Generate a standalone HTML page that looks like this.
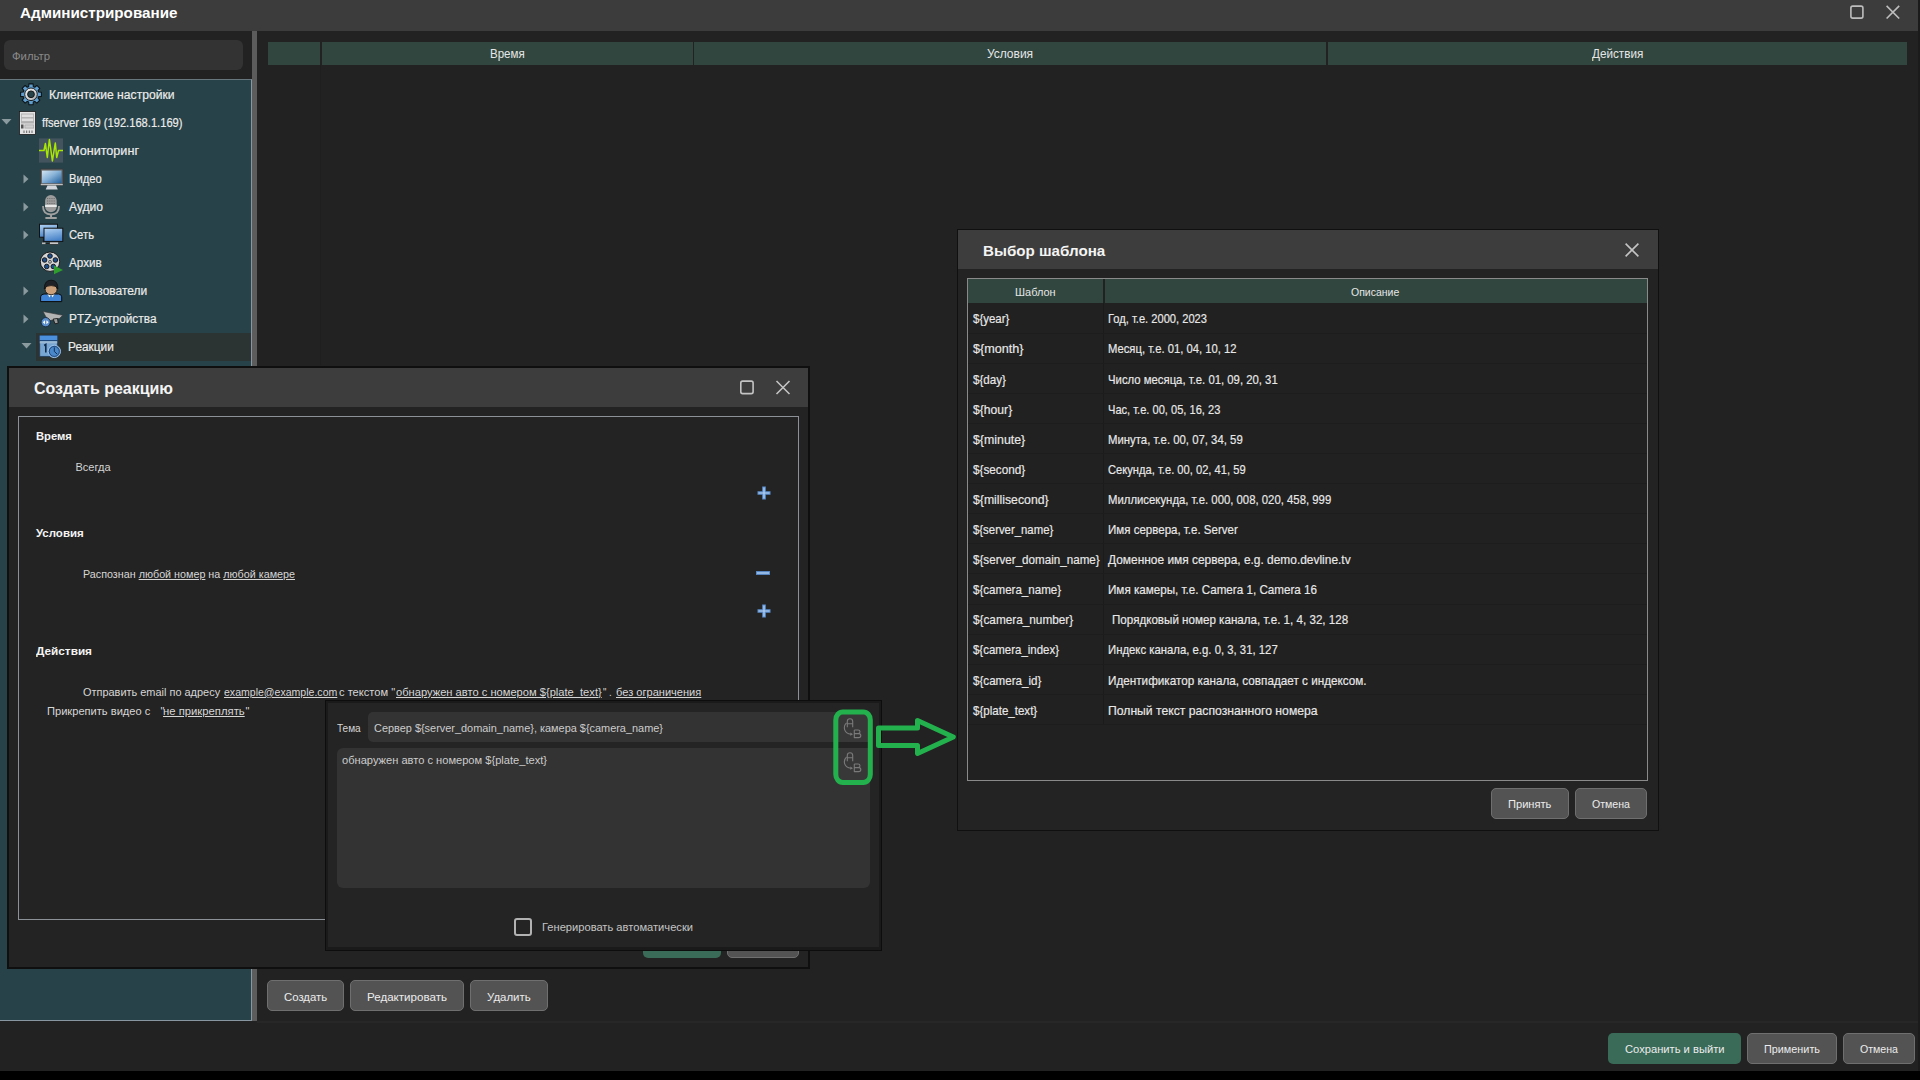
<!DOCTYPE html>
<html><head><meta charset="utf-8"><style>
html,body{margin:0;padding:0;width:1920px;height:1080px;overflow:hidden;background:#222222;font-family:"Liberation Sans", sans-serif;}
u{text-decoration:underline;text-underline-offset:1px;}
</style></head><body>
<div style="position:absolute;left:0px;top:0px;width:1918px;height:31px;background:#3c3c3c"></div>
<div style="position:absolute;left:1918px;top:0px;width:2px;height:1080px;background:#1b1b1b"></div>
<svg style="position:absolute;left:1846px;top:1px" width="60" height="24" viewBox="1846 1 60 24"><rect x="1850.9" y="6.1" width="12" height="12" rx="1.8" fill="none" stroke="#bdbdbd" stroke-width="1.6"/><path d="M1886.6 5.9 L1899.2 18.5 M1899.2 5.9 L1886.6 18.5" stroke="#bdbdbd" stroke-width="1.6"/></svg>
<div style="position:absolute;left:4px;top:40px;width:239px;height:30px;background:#333333;border-radius:6px"></div>
<div style="position:absolute;left:0px;top:79px;width:251px;height:941px;background:#284249;border-top:1px solid #66767c;border-right:1px solid #8796a0;border-bottom:1px solid #8796a0;box-sizing:border-box;width:252px;height:942px"></div>
<div style="position:absolute;left:252px;top:31px;width:5px;height:990px;background:#5c5c5c"></div>
<div style="position:absolute;left:36px;top:333px;width:215px;height:28px;background:#2c3433"></div>
<div style="position:absolute;left:268px;top:42px;width:52px;height:23px;background:#30463f"></div>
<div style="position:absolute;left:322px;top:42px;width:371px;height:23px;background:#30463f"></div>
<div style="position:absolute;left:694px;top:42px;width:632px;height:23px;background:#30463f"></div>
<div style="position:absolute;left:1328px;top:42px;width:579px;height:23px;background:#30463f"></div>
<div style="position:absolute;left:320px;top:65px;width:1px;height:300px;background:#1f1f1f"></div>
<div style="position:absolute;left:257px;top:1021px;width:1661px;height:2px;background:#272727"></div>
<div style="position:absolute;left:0px;top:1071px;width:1920px;height:9px;background:#000"></div>
<div style="position:absolute;left:267px;top:979.5px;width:77px;height:31.5px;background:#535353;border:1px solid #6f6f6f;border-radius:5px;box-sizing:border-box"></div>
<div style="position:absolute;left:350px;top:979.5px;width:114px;height:31.5px;background:#535353;border:1px solid #6f6f6f;border-radius:5px;box-sizing:border-box"></div>
<div style="position:absolute;left:470px;top:979.5px;width:78px;height:31.5px;background:#535353;border:1px solid #6f6f6f;border-radius:5px;box-sizing:border-box"></div>
<div style="position:absolute;left:1608px;top:1033px;width:133px;height:31px;background:#3a6a58;border-radius:5px;box-sizing:border-box"></div>
<div style="position:absolute;left:1747px;top:1033px;width:90px;height:31px;background:#535353;border:1px solid #6f6f6f;border-radius:5px;box-sizing:border-box"></div>
<div style="position:absolute;left:1843px;top:1033px;width:72px;height:31px;background:#535353;border:1px solid #6f6f6f;border-radius:5px;box-sizing:border-box"></div>
<svg style="position:absolute;left:1px;top:118px" width="12" height="8"><path d="M0.5 1 L10.5 1 L5.5 6.5Z" fill="#8a9a9e"/></svg>
<svg style="position:absolute;left:22px;top:174px" width="8" height="10"><path d="M1.5 0.5 L6.5 5 L1.5 9.5Z" fill="#8a9a9e"/></svg>
<svg style="position:absolute;left:22px;top:202px" width="8" height="10"><path d="M1.5 0.5 L6.5 5 L1.5 9.5Z" fill="#8a9a9e"/></svg>
<svg style="position:absolute;left:22px;top:230px" width="8" height="10"><path d="M1.5 0.5 L6.5 5 L1.5 9.5Z" fill="#8a9a9e"/></svg>
<svg style="position:absolute;left:22px;top:286px" width="8" height="10"><path d="M1.5 0.5 L6.5 5 L1.5 9.5Z" fill="#8a9a9e"/></svg>
<svg style="position:absolute;left:22px;top:314px" width="8" height="10"><path d="M1.5 0.5 L6.5 5 L1.5 9.5Z" fill="#8a9a9e"/></svg>
<svg style="position:absolute;left:21px;top:342px" width="12" height="8"><path d="M0.5 1 L10.5 1 L5.5 6.5Z" fill="#8a9a9e"/></svg>
<svg style="position:absolute;left:15px;top:80px" width="30" height="30" viewBox="0 0 30 30">
<defs><linearGradient id="rg" x1="0" y1="0" x2="1" y2="1"><stop offset="0" stop-color="#f4f4f4"/><stop offset="0.6" stop-color="#d0d0d0"/><stop offset="1" stop-color="#9a9a9a"/></linearGradient></defs>
<g transform="translate(16,14.3)">
<path fill="#5f9fd0" stroke="#0c1418" stroke-width="1.1" stroke-linejoin="round" d="M-2.34,-7.65 L-2.11,-10.39 L2.11,-10.39 L2.34,-7.65 L3.76,-7.06 L5.85,-8.84 L8.84,-5.85 L7.06,-3.76 L7.65,-2.34 L10.39,-2.11 L10.39,2.11 L7.65,2.34 L7.06,3.76 L8.84,5.85 L5.85,8.84 L3.76,7.06 L2.34,7.65 L2.11,10.39 L-2.11,10.39 L-2.34,7.65 L-3.76,7.06 L-5.85,8.84 L-8.84,5.85 L-7.06,3.76 L-7.65,2.34 L-10.39,2.11 L-10.39,-2.11 L-7.65,-2.34 L-7.06,-3.76 L-8.84,-5.85 L-5.85,-8.84 L-3.76,-7.06Z"/>
<circle r="6.3" fill="url(#rg)" stroke="#101010" stroke-width="0.9"/>
<circle r="3.4" fill="#284249" stroke="#101010" stroke-width="0.9"/>
</g></svg>
<svg style="position:absolute;left:19px;top:111px" width="17" height="24" viewBox="0 0 17 24">
<rect x="0.5" y="0.5" width="16" height="23" fill="#e4e4e4" stroke="#1a1a1a" stroke-width="0.8"/>
<rect x="2" y="2.5" width="13" height="10" fill="#b0b0b0"/>
<rect x="2.8" y="3.5" width="11.4" height="2.6" fill="#dedede"/><rect x="2.8" y="7.5" width="11.4" height="2.6" fill="#dedede"/>
<rect x="2" y="13.5" width="2.5" height="4" fill="#555"/><rect x="5.5" y="13.5" width="9.5" height="4" fill="#a8a8a8"/><rect x="6.3" y="14.3" width="8" height="2.4" fill="#cfcfcf"/>
<path d="M5 19.5 L5 22 M7.7 19.5 L7.7 22 M10.3 19.5 L10.3 22 M13 19.5 L13 22" stroke="#666" stroke-width="1"/></svg>
<svg style="position:absolute;left:39px;top:138px" width="24" height="25" viewBox="0 0 24 25">
<rect x="0" y="0.4" width="24" height="24.2" fill="#44545e"/>
<path d="M0 12.5 L5 12.5 L6.4 5.5 L8.3 19.5 L10.4 1.5 L13.4 23 L16.3 5 L17.7 19.5 L19.5 12.5 L24 12.5" fill="none" stroke="#a8e800" stroke-width="1.5" stroke-linejoin="round"/></svg>
<svg style="position:absolute;left:40px;top:168px" width="24" height="22" viewBox="0 0 24 22">
<defs><linearGradient id="mg" x1="0" y1="0" x2="1" y2="1"><stop offset="0" stop-color="#d4e4f0"/><stop offset="0.45" stop-color="#8ab4d8"/><stop offset="1" stop-color="#1d5e9c"/></linearGradient></defs>
<rect x="0.5" y="1" width="22.5" height="16.2" rx="1" fill="#666" stroke="#3a3a3a" stroke-width="0.8"/>
<rect x="2" y="2.6" width="19.5" height="12.6" fill="url(#mg)"/>
<rect x="0.8" y="16" width="22" height="1.2" fill="#c0c0c0"/>
<path d="M7.5 17.6 L16 17.6 L17.8 21.4 L5.7 21.4Z" fill="#d0d6dc"/></svg>
<svg style="position:absolute;left:41px;top:194px" width="20" height="26" viewBox="0 0 20 26">
<rect x="4.1" y="1" width="11.6" height="17.3" rx="5.8" fill="#9c9c9c"/>
<path d="M6 4.5 L14 4.5 M6 7 L14 7 M6 9.5 L14 9.5" stroke="#6a6a6a" stroke-width="0.9" stroke-dasharray="1.2 1"/>
<rect x="4.1" y="10.8" width="11.6" height="2.2" fill="#e8e8e8"/>
<path d="M2 12 Q2 20.5 10 20.5 Q18 20.5 18 12" fill="none" stroke="#a0a0a0" stroke-width="1.8"/>
<rect x="9.1" y="20.3" width="1.9" height="3.5" fill="#a0a0a0"/><rect x="4.1" y="23" width="11.9" height="2" rx="1" fill="#a0a0a0"/></svg>
<svg style="position:absolute;left:39px;top:223px" width="25" height="23" viewBox="0 0 25 23">
<defs><linearGradient id="ng" x1="0" y1="0" x2="0.3" y2="1"><stop offset="0" stop-color="#b4d4f4"/><stop offset="1" stop-color="#4a84c8"/></linearGradient></defs>
<rect x="0.5" y="1.2" width="18" height="13" fill="url(#ng)" stroke="#111" stroke-width="1"/>
<path d="M4.5 14.2 L4.5 20.5 L10.5 20.5" stroke="#222" stroke-width="1.2" fill="none"/>
<rect x="5" y="5.2" width="18.8" height="13.2" fill="url(#ng)" stroke="#111" stroke-width="1"/>
<rect x="10.7" y="19" width="8.8" height="2.3" fill="#c8c8c8" stroke="#222" stroke-width="0.6"/>
<rect x="3" y="19.5" width="3.5" height="1.6" fill="#bbb"/></svg>
<svg style="position:absolute;left:39px;top:251px" width="26" height="25" viewBox="0 0 26 25">
<circle cx="11" cy="10.7" r="9.7" fill="#d4d4d4" stroke="#111" stroke-width="0.9"/>
<g fill="#1d4e8a" stroke="#111" stroke-width="0.9">
<circle cx="11" cy="5" r="2.3"/><circle cx="16.4" cy="9" r="2.3"/><circle cx="14.3" cy="15.5" r="2.3"/><circle cx="7.7" cy="15.5" r="2.3"/><circle cx="5.6" cy="9" r="2.3"/></g>
<rect x="9.8" y="9.6" width="2.4" height="2.4" rx="0.6" fill="#eee" stroke="#111" stroke-width="0.8"/>
<path d="M15 14.5 L24 19 L15 23.3Z" fill="#2f9e2f"/></svg>
<svg style="position:absolute;left:40px;top:279px" width="23" height="24" viewBox="0 0 23 24">
<path d="M0.6 22.6 L0.6 17.8 Q0.8 15.2 4 15 L18.5 15 Q21.6 15.2 21.7 17.8 L21.7 22.6Z" fill="#3f84d4" stroke="#0a0a0a" stroke-width="1"/>
<path d="M7.5 15 L9.5 18.5 L11 15.5 L12.5 18.5 L14.5 15Z" fill="#f0f0f0"/>
<ellipse cx="11.1" cy="10.5" rx="6" ry="5.2" fill="#c9a07a" stroke="#111" stroke-width="0.8"/>
<path d="M4.3 10 Q4 1.2 11.1 1.2 Q18.2 1.2 17.9 10 Q16.5 6.5 11.1 6.6 Q5.7 6.5 4.3 10Z" fill="#1f2226" stroke="#0a0a0a" stroke-width="0.7"/></svg>
<svg style="position:absolute;left:40px;top:309px" width="24" height="20" viewBox="0 0 24 20">
<path d="M3 2.5 L22.8 6.3 L19.6 9.3 L10 11.6 L6 8Z" fill="#b4b4b4" stroke="#333" stroke-width="0.6"/>
<path d="M13.2 10 L17.5 9.5 L18.2 14.2 L15 14.8Z" fill="#9a9a9a" stroke="#111" stroke-width="0.8"/>
<circle cx="5.7" cy="13.2" r="4.6" fill="#5b8fcc" stroke="#0f1f33" stroke-width="0.8"/>
<path d="M2.8 13.2 L5 11.2 L5 15.2Z M8.6 13.2 L6.4 11.2 L6.4 15.2Z" fill="#fff"/></svg>
<svg style="position:absolute;left:39px;top:335px" width="23" height="26" viewBox="0 0 23 26">
<rect x="0.8" y="0.7" width="17.4" height="20.6" fill="#78a6d2" stroke="#1d3c66" stroke-width="0.7"/>
<rect x="0.8" y="0.7" width="17.4" height="4.3" fill="#4b90dc"/>
<rect x="0.8" y="5" width="17.4" height="1.2" fill="#1f4a80"/>
<rect x="0.8" y="6.2" width="17.4" height="2.2" fill="#9ab8d4"/>
<path d="M5.2 10.5 L6.8 9.5 L6.8 17.5" stroke="#0f2a4a" stroke-width="1.6" fill="none"/>
<circle cx="15.3" cy="16.4" r="6.2" fill="#4a88cc" stroke="#9cc0e4" stroke-width="1"/>
<circle cx="15.3" cy="16.4" r="5" fill="none" stroke="#1a3a66" stroke-width="0.8"/>
<path d="M15.3 12.3 L15.3 16.4 L18 19" stroke="#10253f" stroke-width="0.9" fill="none"/></svg>
<div style="position:absolute;left:7px;top:366px;width:803px;height:603px;background:#0f0f0f"></div>
<div style="position:absolute;left:9px;top:368px;width:799px;height:599px;background:#232323"></div>
<div style="position:absolute;left:9px;top:368px;width:799px;height:39px;background:#3d3d3d"></div>
<svg style="position:absolute;left:735px;top:375px" width="60" height="25" viewBox="735 375 60 25"><rect x="740.8" y="381.1" width="12.3" height="12.5" rx="1.8" fill="none" stroke="#c4c4c4" stroke-width="1.6"/><path d="M776.5 381 L789.5 394 M789.5 381 L776.5 394" stroke="#c4c4c4" stroke-width="1.6"/></svg>
<div style="position:absolute;left:18px;top:416px;width:781px;height:504px;border:1px solid #8c9097;box-sizing:border-box"></div>
<svg style="position:absolute;left:755.9px;top:484.9px" width="16" height="16" viewBox="0 0 16 16"><path d="M8 1.5 L8 14.5 M1.5 8 L14.5 8" stroke="#5b8fd0" stroke-width="3.6"/><path d="M8 2.5 L8 13.5 M2.5 8 L13.5 8" stroke="#b8d2ee" stroke-width="1.2"/></svg>
<svg style="position:absolute;left:754.8px;top:565px" width="16" height="16" viewBox="0 0 16 16"><path d="M1 8 L15 8" stroke="#5b8fd0" stroke-width="3.8"/><path d="M2 8 L14 8" stroke="#b8d2ee" stroke-width="1.2"/></svg>
<svg style="position:absolute;left:755.8px;top:603.2px" width="16" height="16" viewBox="0 0 16 16"><path d="M8 1.5 L8 14.5 M1.5 8 L14.5 8" stroke="#5b8fd0" stroke-width="3.6"/><path d="M8 2.5 L8 13.5 M2.5 8 L13.5 8" stroke="#b8d2ee" stroke-width="1.2"/></svg>
<div style="position:absolute;left:643px;top:927px;width:78px;height:31px;background:#3a6a58;border-radius:5px"></div>
<div style="position:absolute;left:726.5px;top:927px;width:72.5px;height:31px;background:#535353;border:1px solid #6f6f6f;border-radius:5px;box-sizing:border-box"></div>
<div style="position:absolute;left:325px;top:700px;width:557px;height:251px;background:#0d0d0d"></div>
<div style="position:absolute;left:326px;top:701px;width:555px;height:249px;background:#1a1a1a"></div>
<div style="position:absolute;left:328px;top:703px;width:551px;height:244px;background:#242424"></div>
<div style="position:absolute;left:367.7px;top:711.7px;width:500.3px;height:30px;background:#333333;border-radius:5px"></div>
<div style="position:absolute;left:838px;top:711.7px;width:30px;height:30px;background:#383838"></div>
<div style="position:absolute;left:336.7px;top:747.7px;width:533.3px;height:140.6px;background:#333333;border-radius:6px"></div>
<div style="position:absolute;left:838px;top:747.7px;width:30px;height:34px;background:#383838"></div>
<svg style="position:absolute;left:842px;top:716.5px" width="24" height="24" viewBox="0 0 24 24">
<g fill="none" stroke="#7a7a7a" stroke-width="1.1" stroke-linejoin="round">
<path d="M5.3 10.2 L5.3 4.6 Q5.3 1.8 8 1.8 Q10.7 1.8 10.7 4.6 L10.7 10.2 M5.3 6.8 L10.7 6.8"/>
<path d="M4.6 5.8 Q1.6 8.5 2.6 12.6 Q4 16.6 9 17.2"/>
<path d="M12.3 13 L12.3 20.6 L16.6 20.6 Q18.8 20.6 18.8 18.5 Q18.8 16.6 16.4 16.6 L12.3 16.6 M12.3 13 L16 13 Q18 13 18 14.8 Q18 16.6 16 16.6"/>
</g>
<path d="M8.4 15.6 L11 17.3 L8.3 18.8Z" fill="#7a7a7a"/>
</svg>
<svg style="position:absolute;left:842px;top:750.5px" width="24" height="24" viewBox="0 0 24 24">
<g fill="none" stroke="#7a7a7a" stroke-width="1.1" stroke-linejoin="round">
<path d="M5.3 10.2 L5.3 4.6 Q5.3 1.8 8 1.8 Q10.7 1.8 10.7 4.6 L10.7 10.2 M5.3 6.8 L10.7 6.8"/>
<path d="M4.6 5.8 Q1.6 8.5 2.6 12.6 Q4 16.6 9 17.2"/>
<path d="M12.3 13 L12.3 20.6 L16.6 20.6 Q18.8 20.6 18.8 18.5 Q18.8 16.6 16.4 16.6 L12.3 16.6 M12.3 13 L16 13 Q18 13 18 14.8 Q18 16.6 16 16.6"/>
</g>
<path d="M8.4 15.6 L11 17.3 L8.3 18.8Z" fill="#7a7a7a"/>
</svg>
<div style="position:absolute;left:514px;top:917.5px;width:18px;height:18.5px;border:2px solid #b2b2b2;border-radius:3px;box-sizing:border-box"></div>
<div style="position:absolute;left:957px;top:229px;width:702px;height:602px;background:#101010"></div>
<div style="position:absolute;left:958px;top:230px;width:700px;height:600px;background:#232323"></div>
<div style="position:absolute;left:958px;top:230px;width:700px;height:39px;background:#3d3d3d"></div>
<svg style="position:absolute;left:1620px;top:238px" width="24" height="24" viewBox="1620 238 24 24"><path d="M1625.6 243.6 L1638.4 256.4 M1638.4 243.6 L1625.6 256.4" stroke="#c4c4c4" stroke-width="1.6"/></svg>
<div style="position:absolute;left:967px;top:278px;width:681px;height:503px;border:1px solid #8a8a8a;box-sizing:border-box;background:#212121"></div>
<div style="position:absolute;left:968px;top:279px;width:135px;height:24px;background:#30463f"></div>
<div style="position:absolute;left:1105px;top:279px;width:542px;height:24px;background:#30463f"></div>
<div style="position:absolute;left:1103px;top:303px;width:1px;height:422.4px;background:#1b1b1b"></div>
<div style="position:absolute;left:968px;top:332.6px;width:679px;height:1px;background:#1d1d1d"></div>
<div style="position:absolute;left:968px;top:362.70000000000005px;width:679px;height:1px;background:#1d1d1d"></div>
<div style="position:absolute;left:968px;top:392.8px;width:679px;height:1px;background:#1d1d1d"></div>
<div style="position:absolute;left:968px;top:422.90000000000003px;width:679px;height:1px;background:#1d1d1d"></div>
<div style="position:absolute;left:968px;top:453.0px;width:679px;height:1px;background:#1d1d1d"></div>
<div style="position:absolute;left:968px;top:483.1px;width:679px;height:1px;background:#1d1d1d"></div>
<div style="position:absolute;left:968px;top:513.2px;width:679px;height:1px;background:#1d1d1d"></div>
<div style="position:absolute;left:968px;top:543.3000000000001px;width:679px;height:1px;background:#1d1d1d"></div>
<div style="position:absolute;left:968px;top:573.4px;width:679px;height:1px;background:#1d1d1d"></div>
<div style="position:absolute;left:968px;top:603.5000000000001px;width:679px;height:1px;background:#1d1d1d"></div>
<div style="position:absolute;left:968px;top:633.6px;width:679px;height:1px;background:#1d1d1d"></div>
<div style="position:absolute;left:968px;top:663.7px;width:679px;height:1px;background:#1d1d1d"></div>
<div style="position:absolute;left:968px;top:693.8000000000001px;width:679px;height:1px;background:#1d1d1d"></div>
<div style="position:absolute;left:968px;top:723.9px;width:679px;height:1px;background:#1d1d1d"></div>
<div style="position:absolute;left:1491px;top:788px;width:78px;height:30.5px;background:#535353;border:1px solid #6f6f6f;border-radius:5px;box-sizing:border-box"></div>
<div style="position:absolute;left:1575px;top:788px;width:72px;height:30.5px;background:#535353;border:1px solid #6f6f6f;border-radius:5px;box-sizing:border-box"></div>
<svg style="position:absolute;left:0;top:0" width="1920" height="1080" viewBox="0 0 1920 1080">
<rect x="835.8" y="711.9" width="34.5" height="70.6" rx="7" ry="8" fill="none" stroke="#22b14c" stroke-width="5"/>
<path d="M878.5 728 L917.5 728 L917.5 720.5 L953.3 737 L917.5 753.5 L917.5 745.5 L878.5 745.5Z" fill="none" stroke="#22b14c" stroke-width="5" stroke-linejoin="round"/>
</svg>
<div class="t" id="t0" style="position:absolute;top:4.86px;font-size:15.4px;line-height:15.4px;font-weight:bold;color:#ffffff;white-space:pre;left:20.00px;transform:scaleX(0.9881);transform-origin:0 0;">Администрирование</div>
<div class="t" id="t1" style="position:absolute;top:51.47px;font-size:11.5px;line-height:11.5px;font-weight:normal;color:#8a8a8a;white-space:pre;left:11.70px;transform:scaleX(0.9860);transform-origin:0 0;">Фильтр</div>
<div class="t" id="t2" style="position:absolute;top:47.94px;font-size:12px;line-height:12px;font-weight:normal;color:#e6e6e6;white-space:pre;left:490.30px;transform:scaleX(0.9610);transform-origin:0 0;">Время</div>
<div class="t" id="t3" style="position:absolute;top:47.94px;font-size:12px;line-height:12px;font-weight:normal;color:#e6e6e6;white-space:pre;left:986.89px;">Условия</div>
<div class="t" id="t4" style="position:absolute;top:47.94px;font-size:12px;line-height:12px;font-weight:normal;color:#e6e6e6;white-space:pre;left:1591.75px;transform:scaleX(0.9747);transform-origin:0 0;">Действия</div>
<div class="t" id="t5" style="position:absolute;top:991.57px;font-size:11.5px;line-height:11.5px;font-weight:normal;color:#ececec;white-space:pre;left:283.90px;transform:scaleX(0.9881);transform-origin:0 0;">Создать</div>
<div class="t" id="t6" style="position:absolute;top:991.57px;font-size:11.5px;line-height:11.5px;font-weight:normal;color:#ececec;white-space:pre;left:367.00px;transform:scaleX(1.0069);transform-origin:0 0;">Редактировать</div>
<div class="t" id="t7" style="position:absolute;top:991.57px;font-size:11.5px;line-height:11.5px;font-weight:normal;color:#ececec;white-space:pre;left:487.15px;transform:scaleX(0.9953);transform-origin:0 0;">Удалить</div>
<div class="t" id="t8" style="position:absolute;top:1043.97px;font-size:11.5px;line-height:11.5px;font-weight:normal;color:#ececec;white-space:pre;left:1624.75px;transform:scaleX(0.9712);transform-origin:0 0;">Сохранить и выйти</div>
<div class="t" id="t9" style="position:absolute;top:1043.97px;font-size:11.5px;line-height:11.5px;font-weight:normal;color:#ececec;white-space:pre;left:1764.00px;transform:scaleX(0.9424);transform-origin:0 0;">Применить</div>
<div class="t" id="t10" style="position:absolute;top:1043.97px;font-size:11.5px;line-height:11.5px;font-weight:normal;color:#ececec;white-space:pre;left:1860.00px;transform:scaleX(0.9209);transform-origin:0 0;">Отмена</div>
<div class="t" id="t11" style="position:absolute;top:89.42px;font-size:12.5px;line-height:12.5px;font-weight:normal;color:#ececec;white-space:pre;left:49.40px;transform:scaleX(0.9714);transform-origin:0 0;-webkit-text-stroke:0.18px currentColor;">Клиентские настройки</div>
<div class="t" id="t12" style="position:absolute;top:117.42px;font-size:12.5px;line-height:12.5px;font-weight:normal;color:#ececec;white-space:pre;left:41.70px;transform:scaleX(0.8920);transform-origin:0 0;-webkit-text-stroke:0.18px currentColor;">ffserver 169 (192.168.1.169)</div>
<div class="t" id="t13" style="position:absolute;top:145.42px;font-size:12.5px;line-height:12.5px;font-weight:normal;color:#ececec;white-space:pre;left:69.40px;transform:scaleX(1.0097);transform-origin:0 0;-webkit-text-stroke:0.18px currentColor;">Мониторинг</div>
<div class="t" id="t14" style="position:absolute;top:173.42px;font-size:12.5px;line-height:12.5px;font-weight:normal;color:#ececec;white-space:pre;left:69.40px;transform:scaleX(0.8979);transform-origin:0 0;-webkit-text-stroke:0.18px currentColor;">Видео</div>
<div class="t" id="t15" style="position:absolute;top:201.42px;font-size:12.5px;line-height:12.5px;font-weight:normal;color:#ececec;white-space:pre;left:69.20px;transform:scaleX(0.9641);transform-origin:0 0;-webkit-text-stroke:0.18px currentColor;">Аудио</div>
<div class="t" id="t16" style="position:absolute;top:229.42px;font-size:12.5px;line-height:12.5px;font-weight:normal;color:#ececec;white-space:pre;left:69.20px;transform:scaleX(0.8989);transform-origin:0 0;-webkit-text-stroke:0.18px currentColor;">Сеть</div>
<div class="t" id="t17" style="position:absolute;top:257.42px;font-size:12.5px;line-height:12.5px;font-weight:normal;color:#ececec;white-space:pre;left:69.20px;transform:scaleX(0.9363);transform-origin:0 0;-webkit-text-stroke:0.18px currentColor;">Архив</div>
<div class="t" id="t18" style="position:absolute;top:285.42px;font-size:12.5px;line-height:12.5px;font-weight:normal;color:#ececec;white-space:pre;left:69.20px;transform:scaleX(0.9596);transform-origin:0 0;-webkit-text-stroke:0.18px currentColor;">Пользователи</div>
<div class="t" id="t19" style="position:absolute;top:313.42px;font-size:12.5px;line-height:12.5px;font-weight:normal;color:#ececec;white-space:pre;left:69.20px;transform:scaleX(0.9493);transform-origin:0 0;-webkit-text-stroke:0.18px currentColor;">PTZ-устройства</div>
<div class="t" id="t20" style="position:absolute;top:341.42px;font-size:12.5px;line-height:12.5px;font-weight:normal;color:#ececec;white-space:pre;left:67.50px;transform:scaleX(0.9483);transform-origin:0 0;-webkit-text-stroke:0.18px currentColor;">Реакции</div>
<div class="t" id="t21" style="position:absolute;top:381.26px;font-size:16px;line-height:16px;font-weight:bold;color:#f4f4f4;white-space:pre;left:34.20px;transform:scaleX(0.9989);transform-origin:0 0;">Создать реакцию</div>
<div class="t" id="t22" style="position:absolute;top:430.97px;font-size:11.5px;line-height:11.5px;font-weight:bold;color:#f4f4f4;white-space:pre;left:36.10px;transform:scaleX(0.9756);transform-origin:0 0;">Время</div>
<div class="t" id="t23" style="position:absolute;top:461.79px;font-size:11px;line-height:11px;font-weight:normal;color:#d4d4d4;white-space:pre;left:75.50px;">Всегда</div>
<div class="t" id="t24" style="position:absolute;top:528.17px;font-size:11.5px;line-height:11.5px;font-weight:bold;color:#f4f4f4;white-space:pre;left:35.90px;">Условия</div>
<div class="t" id="t25" style="position:absolute;top:569.09px;font-size:11px;line-height:11px;font-weight:normal;color:#d6d6d6;white-space:pre;left:82.60px;transform:scaleX(0.9775);transform-origin:0 0;">Распознан <u>любой номер</u> на <u>любой камере</u></div>
<div class="t" id="t26" style="position:absolute;top:645.97px;font-size:11.5px;line-height:11.5px;font-weight:bold;color:#f4f4f4;white-space:pre;left:35.90px;transform:scaleX(1.0240);transform-origin:0 0;">Действия</div>
<div class="t" id="t27" style="position:absolute;top:686.69px;font-size:11px;line-height:11px;font-weight:normal;color:#d6d6d6;white-space:pre;left:83.10px;transform:scaleX(0.9946);transform-origin:0 0;">Отправить email по адресу</div>
<div class="t" id="t28" style="position:absolute;top:686.69px;font-size:11px;line-height:11px;font-weight:normal;color:#d6d6d6;white-space:pre;left:223.90px;transform:scaleX(0.9588);transform-origin:0 0;"><u>example@example.com</u></div>
<div class="t" id="t29" style="position:absolute;top:686.69px;font-size:11px;line-height:11px;font-weight:normal;color:#d6d6d6;white-space:pre;left:339.40px;transform:scaleX(1.0109);transform-origin:0 0;">с текстом "</div>
<div class="t" id="t30" style="position:absolute;top:686.69px;font-size:11px;line-height:11px;font-weight:normal;color:#d6d6d6;white-space:pre;left:396.30px;transform:scaleX(1.0128);transform-origin:0 0;"><u>обнаружен авто с номером ${plate_text}</u></div>
<div class="t" id="t31" style="position:absolute;top:686.69px;font-size:11px;line-height:11px;font-weight:normal;color:#d6d6d6;white-space:pre;left:603.00px;transform:scaleX(0.8773);transform-origin:0 0;">" .</div>
<div class="t" id="t32" style="position:absolute;top:686.69px;font-size:11px;line-height:11px;font-weight:normal;color:#d6d6d6;white-space:pre;left:616.20px;transform:scaleX(1.0063);transform-origin:0 0;"><u>без ограничения</u></div>
<div class="t" id="t33" style="position:absolute;top:705.69px;font-size:11px;line-height:11px;font-weight:normal;color:#d6d6d6;white-space:pre;left:46.60px;transform:scaleX(1.0093);transform-origin:0 0;">Прикрепить видео с</div>
<div class="t" id="t34" style="position:absolute;top:705.69px;font-size:11px;line-height:11px;font-weight:normal;color:#d6d6d6;white-space:pre;left:160.40px;">"</div>
<div class="t" id="t35" style="position:absolute;top:705.69px;font-size:11px;line-height:11px;font-weight:normal;color:#d6d6d6;white-space:pre;left:163.30px;transform:scaleX(1.0261);transform-origin:0 0;"><u>не прикреплять</u></div>
<div class="t" id="t36" style="position:absolute;top:705.69px;font-size:11px;line-height:11px;font-weight:normal;color:#d6d6d6;white-space:pre;left:245.50px;">"</div>
<div class="t" id="t37" style="position:absolute;top:722.89px;font-size:11px;line-height:11px;font-weight:normal;color:#d4d4d4;white-space:pre;left:337.20px;transform:scaleX(0.9148);transform-origin:0 0;">Тема</div>
<div class="t" id="t38" style="position:absolute;top:723.39px;font-size:11px;line-height:11px;font-weight:normal;color:#cccccc;white-space:pre;left:374.30px;transform:scaleX(0.9928);transform-origin:0 0;">Сервер ${server_domain_name}, камера ${camera_name}</div>
<div class="t" id="t39" style="position:absolute;top:754.69px;font-size:11px;line-height:11px;font-weight:normal;color:#cccccc;white-space:pre;left:341.70px;transform:scaleX(1.0094);transform-origin:0 0;">обнаружен авто с номером ${plate_text}</div>
<div class="t" id="t40" style="position:absolute;top:921.89px;font-size:11px;line-height:11px;font-weight:normal;color:#c4c4c4;white-space:pre;left:541.70px;transform:scaleX(1.0125);transform-origin:0 0;">Генерировать автоматически</div>
<div class="t" id="t41" style="position:absolute;top:243.13px;font-size:15.2px;line-height:15.2px;font-weight:bold;color:#f4f4f4;white-space:pre;left:983.30px;transform:scaleX(0.9980);transform-origin:0 0;">Выбор шаблона</div>
<div class="t" id="t42" style="position:absolute;top:287.07px;font-size:11.5px;line-height:11.5px;font-weight:normal;color:#e6e6e6;white-space:pre;left:1014.70px;transform:scaleX(0.9532);transform-origin:0 0;">Шаблон</div>
<div class="t" id="t43" style="position:absolute;top:287.07px;font-size:11.5px;line-height:11.5px;font-weight:normal;color:#e6e6e6;white-space:pre;left:1350.85px;transform:scaleX(0.9127);transform-origin:0 0;">Описание</div>
<div class="t" id="t44" style="position:absolute;top:312.30px;font-size:13px;line-height:13px;font-weight:normal;color:#e8e8e8;white-space:pre;left:972.80px;transform:scaleX(0.8834);transform-origin:0 0;-webkit-text-stroke:0.18px currentColor;">${year}</div>
<div class="t" id="t45" style="position:absolute;top:312.30px;font-size:13px;line-height:13px;font-weight:normal;color:#e8e8e8;white-space:pre;left:1108.20px;transform:scaleX(0.8566);transform-origin:0 0;-webkit-text-stroke:0.18px currentColor;">Год, т.е. 2000, 2023</div>
<div class="t" id="t46" style="position:absolute;top:342.40px;font-size:13px;line-height:13px;font-weight:normal;color:#e8e8e8;white-space:pre;left:972.80px;transform:scaleX(0.9703);transform-origin:0 0;-webkit-text-stroke:0.18px currentColor;">${month}</div>
<div class="t" id="t47" style="position:absolute;top:342.40px;font-size:13px;line-height:13px;font-weight:normal;color:#e8e8e8;white-space:pre;left:1108.20px;transform:scaleX(0.8652);transform-origin:0 0;-webkit-text-stroke:0.18px currentColor;">Месяц, т.е. 01, 04, 10, 12</div>
<div class="t" id="t48" style="position:absolute;top:372.50px;font-size:13px;line-height:13px;font-weight:normal;color:#e8e8e8;white-space:pre;left:972.80px;transform:scaleX(0.8949);transform-origin:0 0;-webkit-text-stroke:0.18px currentColor;">${day}</div>
<div class="t" id="t49" style="position:absolute;top:372.50px;font-size:13px;line-height:13px;font-weight:normal;color:#e8e8e8;white-space:pre;left:1108.20px;transform:scaleX(0.8716);transform-origin:0 0;-webkit-text-stroke:0.18px currentColor;">Число месяца, т.е. 01, 09, 20, 31</div>
<div class="t" id="t50" style="position:absolute;top:402.60px;font-size:13px;line-height:13px;font-weight:normal;color:#e8e8e8;white-space:pre;left:972.80px;transform:scaleX(0.9347);transform-origin:0 0;-webkit-text-stroke:0.18px currentColor;">${hour}</div>
<div class="t" id="t51" style="position:absolute;top:402.60px;font-size:13px;line-height:13px;font-weight:normal;color:#e8e8e8;white-space:pre;left:1108.20px;transform:scaleX(0.8526);transform-origin:0 0;-webkit-text-stroke:0.18px currentColor;">Час, т.е. 00, 05, 16, 23</div>
<div class="t" id="t52" style="position:absolute;top:432.70px;font-size:13px;line-height:13px;font-weight:normal;color:#e8e8e8;white-space:pre;left:972.80px;transform:scaleX(0.9502);transform-origin:0 0;-webkit-text-stroke:0.18px currentColor;">${minute}</div>
<div class="t" id="t53" style="position:absolute;top:432.70px;font-size:13px;line-height:13px;font-weight:normal;color:#e8e8e8;white-space:pre;left:1108.20px;transform:scaleX(0.8740);transform-origin:0 0;-webkit-text-stroke:0.18px currentColor;">Минута, т.е. 00, 07, 34, 59</div>
<div class="t" id="t54" style="position:absolute;top:462.80px;font-size:13px;line-height:13px;font-weight:normal;color:#e8e8e8;white-space:pre;left:972.80px;transform:scaleX(0.9024);transform-origin:0 0;-webkit-text-stroke:0.18px currentColor;">${second}</div>
<div class="t" id="t55" style="position:absolute;top:462.80px;font-size:13px;line-height:13px;font-weight:normal;color:#e8e8e8;white-space:pre;left:1108.20px;transform:scaleX(0.8586);transform-origin:0 0;-webkit-text-stroke:0.18px currentColor;">Секунда, т.е. 00, 02, 41, 59</div>
<div class="t" id="t56" style="position:absolute;top:492.90px;font-size:13px;line-height:13px;font-weight:normal;color:#e8e8e8;white-space:pre;left:972.80px;transform:scaleX(0.9424);transform-origin:0 0;-webkit-text-stroke:0.18px currentColor;">${millisecond}</div>
<div class="t" id="t57" style="position:absolute;top:492.90px;font-size:13px;line-height:13px;font-weight:normal;color:#e8e8e8;white-space:pre;left:1108.20px;transform:scaleX(0.8728);transform-origin:0 0;-webkit-text-stroke:0.18px currentColor;">Миллисекунда, т.е. 000, 008, 020, 458, 999</div>
<div class="t" id="t58" style="position:absolute;top:523.00px;font-size:13px;line-height:13px;font-weight:normal;color:#e8e8e8;white-space:pre;left:972.80px;transform:scaleX(0.8749);transform-origin:0 0;-webkit-text-stroke:0.18px currentColor;">${server_name}</div>
<div class="t" id="t59" style="position:absolute;top:523.00px;font-size:13px;line-height:13px;font-weight:normal;color:#e8e8e8;white-space:pre;left:1108.20px;transform:scaleX(0.8864);transform-origin:0 0;-webkit-text-stroke:0.18px currentColor;">Имя сервера, т.е. Server</div>
<div class="t" id="t60" style="position:absolute;top:553.10px;font-size:13px;line-height:13px;font-weight:normal;color:#e8e8e8;white-space:pre;left:972.80px;transform:scaleX(0.8944);transform-origin:0 0;-webkit-text-stroke:0.18px currentColor;">${server_domain_name}</div>
<div class="t" id="t61" style="position:absolute;top:553.10px;font-size:13px;line-height:13px;font-weight:normal;color:#e8e8e8;white-space:pre;left:1108.20px;transform:scaleX(0.9168);transform-origin:0 0;-webkit-text-stroke:0.18px currentColor;">Доменное имя сервера, e.g. demo.devline.tv</div>
<div class="t" id="t62" style="position:absolute;top:583.20px;font-size:13px;line-height:13px;font-weight:normal;color:#e8e8e8;white-space:pre;left:972.80px;transform:scaleX(0.8898);transform-origin:0 0;-webkit-text-stroke:0.18px currentColor;">${camera_name}</div>
<div class="t" id="t63" style="position:absolute;top:583.20px;font-size:13px;line-height:13px;font-weight:normal;color:#e8e8e8;white-space:pre;left:1108.20px;transform:scaleX(0.8959);transform-origin:0 0;-webkit-text-stroke:0.18px currentColor;">Имя камеры, т.е. Camera 1, Camera 16</div>
<div class="t" id="t64" style="position:absolute;top:613.30px;font-size:13px;line-height:13px;font-weight:normal;color:#e8e8e8;white-space:pre;left:972.80px;transform:scaleX(0.9061);transform-origin:0 0;-webkit-text-stroke:0.18px currentColor;">${camera_number}</div>
<div class="t" id="t65" style="position:absolute;top:613.30px;font-size:13px;line-height:13px;font-weight:normal;color:#e8e8e8;white-space:pre;left:1111.70px;transform:scaleX(0.8933);transform-origin:0 0;-webkit-text-stroke:0.18px currentColor;">Порядковый номер канала, т.е. 1, 4, 32, 128</div>
<div class="t" id="t66" style="position:absolute;top:643.40px;font-size:13px;line-height:13px;font-weight:normal;color:#e8e8e8;white-space:pre;left:972.80px;transform:scaleX(0.8813);transform-origin:0 0;-webkit-text-stroke:0.18px currentColor;">${camera_index}</div>
<div class="t" id="t67" style="position:absolute;top:643.40px;font-size:13px;line-height:13px;font-weight:normal;color:#e8e8e8;white-space:pre;left:1108.20px;transform:scaleX(0.8724);transform-origin:0 0;-webkit-text-stroke:0.18px currentColor;">Индекс канала, e.g. 0, 3, 31, 127</div>
<div class="t" id="t68" style="position:absolute;top:673.50px;font-size:13px;line-height:13px;font-weight:normal;color:#e8e8e8;white-space:pre;left:972.80px;transform:scaleX(0.8927);transform-origin:0 0;-webkit-text-stroke:0.18px currentColor;">${camera_id}</div>
<div class="t" id="t69" style="position:absolute;top:673.50px;font-size:13px;line-height:13px;font-weight:normal;color:#e8e8e8;white-space:pre;left:1108.20px;transform:scaleX(0.9016);transform-origin:0 0;-webkit-text-stroke:0.18px currentColor;">Идентификатор канала, совпадает с индексом.</div>
<div class="t" id="t70" style="position:absolute;top:703.60px;font-size:13px;line-height:13px;font-weight:normal;color:#e8e8e8;white-space:pre;left:972.80px;transform:scaleX(0.8880);transform-origin:0 0;-webkit-text-stroke:0.18px currentColor;">${plate_text}</div>
<div class="t" id="t71" style="position:absolute;top:703.60px;font-size:13px;line-height:13px;font-weight:normal;color:#e8e8e8;white-space:pre;left:1108.20px;transform:scaleX(0.9374);transform-origin:0 0;-webkit-text-stroke:0.18px currentColor;">Полный текст распознанного номера</div>
<div class="t" id="t72" style="position:absolute;top:798.97px;font-size:11.5px;line-height:11.5px;font-weight:normal;color:#ececec;white-space:pre;left:1508.30px;transform:scaleX(0.9661);transform-origin:0 0;">Принять</div>
<div class="t" id="t73" style="position:absolute;top:798.97px;font-size:11.5px;line-height:11.5px;font-weight:normal;color:#ececec;white-space:pre;left:1592.00px;transform:scaleX(0.9209);transform-origin:0 0;">Отмена</div>
</body></html>
